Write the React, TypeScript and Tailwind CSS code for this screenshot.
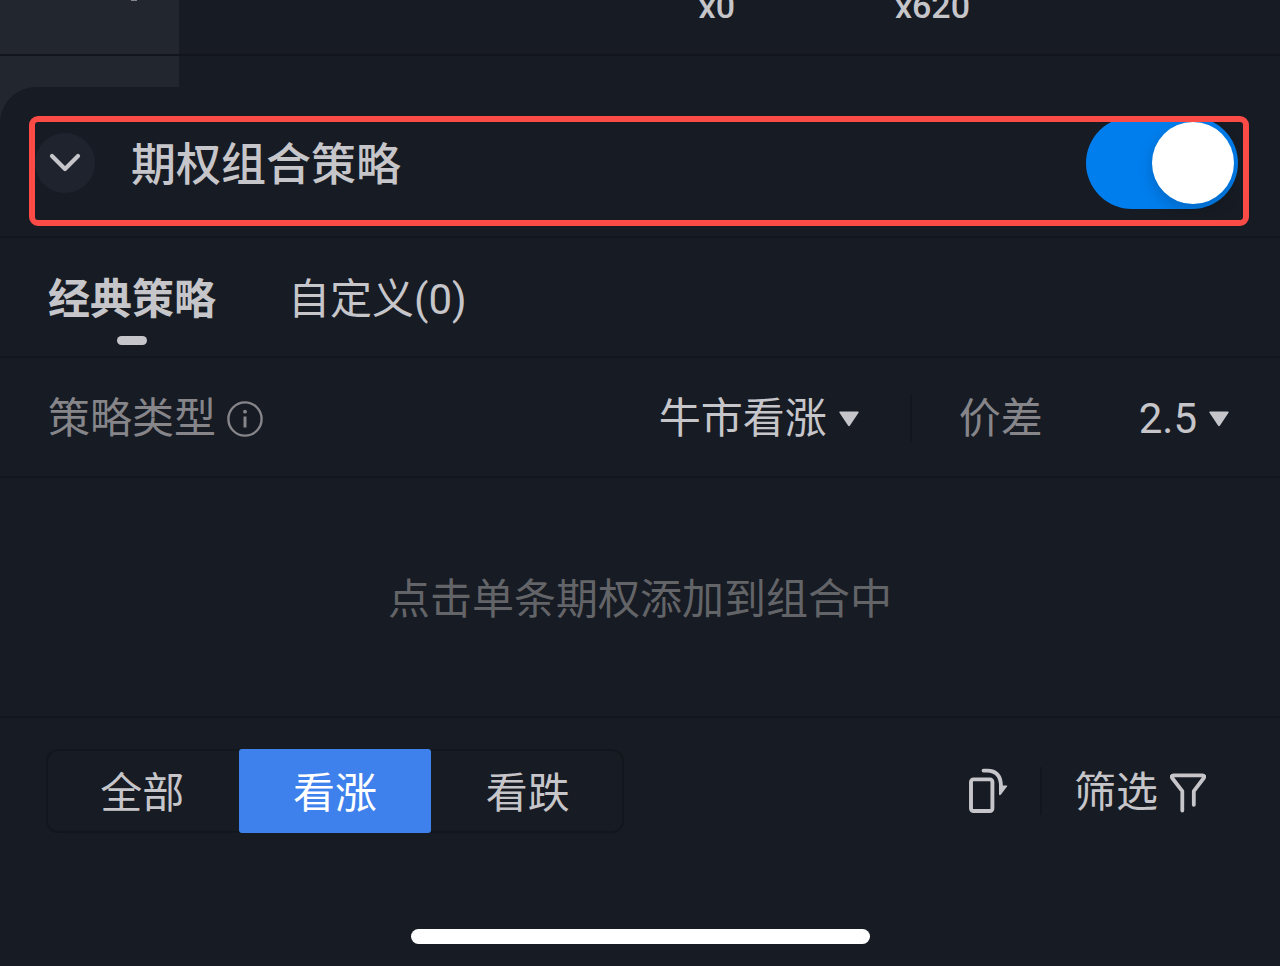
import { useState } from "react";

function Caret() {
  return (
    <svg aria-hidden="true" viewBox="0 0 20 16" className="pointer-events-none h-4 w-5 shrink-0 fill-[#c6c6ca]">
      <path d="M1.3 0.5h17.4q1.6 0 0.8 1.3L11 14.6q-1 1.3-2 0L0.5 1.8Q-0.3 0.5 1.3 0.5Z" />
    </svg>
  );
}

function InfoIcon() {
  return (
    <svg aria-hidden="true" viewBox="0 0 36 36" fill="none" className="size-9 stroke-[#85858a]">
      <circle cx="18" cy="18" r="16.6" strokeWidth="2.4" />
      <path d="M18 15.5v11" strokeWidth="3" />
      <circle cx="18" cy="10.7" r="1.9" stroke="none" fill="#85858a" />
    </svg>
  );
}

function RotateIcon() {
  return (
    <svg aria-hidden="true" viewBox="0 0 40 46" fill="none" className="h-[46px] w-10">
      <rect x="3" y="11.4" width="21.4" height="31.6" rx="2.5" stroke="#c6c6ca" strokeWidth="3.9" />
      <path d="M15.5 2.6H19C28.500 2.600 33 8.500 33 18.500" stroke="#c6c6ca" strokeWidth="3.8" strokeLinecap="round" />
      <path d="M31 17.500H38.500q1.300 0 .5 1.100L33 26.600q-1.800 1.500-2-.6Z" fill="#c6c6ca" />
    </svg>
  );
}

function FilterIcon() {
  return (
    <svg aria-hidden="true" viewBox="0 0 36 40" fill="none" className="h-10 w-9">
      <path
        d="M12.3 37.5V18.2L2.2 5Q.8 2.4 3.6 2.4H32.4Q35.2 2.4 33.8 5L23.8 18.2V31.8"
        stroke="#c6c6ca"
        strokeWidth="3.8"
        strokeLinecap="round"
        strokeLinejoin="round"
      />
    </svg>
  );
}

const sides = ["全部", "看涨", "看跌"];
const tabs = ["经典策略", "自定义(0)"];

export default function App() {
  const [side, setSide] = useState("看涨");
  const [tab, setTab] = useState(0);

  return (
    <div className="min-h-screen overflow-hidden bg-[#171b23] font-['Roboto','Noto_Sans_CJK_SC',sans-serif] text-[42px] leading-[60px] text-[#c6c6ca]">
      <div className="flex flex-col">
        <div className="flex h-14 items-end overflow-hidden border-b-2 border-[#12151c] text-[34px] leading-10 font-medium">
          <div className="flex h-full w-[179px] shrink-0 items-start bg-[#22262e] pl-[131px]">
            <span className="h-px w-1.5 bg-[#85858a]" />
          </div>
          <div className="w-[556px] pb-7 text-right">x0</div>
          <div className="w-[235px] pb-7 text-right">x620</div>
        </div>
        <div className="h-[67px] w-[179px] bg-[linear-gradient(#22262e_31px,transparent_31px)]">
          <div className="h-full w-12 bg-[#22262e]" />
        </div>
      </div>

      <section className="relative -mt-9 rounded-t-[36px] bg-[#171b23]">
        <header className="relative flex h-[151px] items-center border-b-2 border-[#12161d] pt-0.5 pr-[42px] pl-[35px]">
          <button aria-label="收起" className="flex size-[60px] items-center justify-center rounded-full bg-[#1e232e]">
            <svg aria-hidden="true" viewBox="0 0 32 20" fill="none" className="h-5 w-8">
              <path d="M3 3l13 13L29 3" stroke="#c6c6ca" strokeWidth="4.2" strokeLinecap="round" strokeLinejoin="round" />
            </svg>
          </button>
          <label htmlFor="combo" className="ml-9 pt-1.5 text-[45px] font-medium">
            期权组合策略
          </label>
          <input
            id="combo"
            type="checkbox"
            role="switch"
            defaultChecked
            className="ml-auto flex h-[92px] w-[152px] appearance-none items-center rounded-full bg-[#3a3f4a] px-1 before:size-[82px] before:rounded-full before:bg-white before:shadow-[0_6px_16px_rgba(0,0,0,0.18)] checked:justify-end checked:bg-[#007eee]"
          />
          <div className="pointer-events-none absolute top-[29px] right-[31px] bottom-[10px] left-[29px] rounded-[9px] border-6 border-[#fa4b47]" />
        </header>

        <nav className="flex h-[120px] items-start gap-[72px] border-b-2 border-[#12161d] px-12 pt-8">
          {tabs.map((name, i) => (
            <button
              key={name}
              onClick={() => setTab(i)}
              className={tab === i ? "flex flex-col items-center gap-[6px] font-bold" : "flex flex-col items-center gap-[6px]"}
            >
              {name}
              {tab === i && <span className="h-[9px] w-[30px] rounded-full bg-[#c6c6ca]" />}
            </button>
          ))}
        </nav>

        <div className="flex h-[120px] items-center border-b-2 border-[#12161d] pt-1 pr-[51px] pl-12">
          <label htmlFor="kind" className="text-[#85858a]">
            策略类型
          </label>
          <button aria-label="策略类型说明" className="ml-[11px]">
            <InfoIcon />
          </button>
          <div className="ml-auto flex items-center gap-3">
            <select id="kind" className="h-[60px] appearance-none [field-sizing:content]">
              <option>牛市看涨</option>
            </select>
            <Caret />
          </div>
          <div className="ml-[51px] h-12 w-0.5 bg-[#12161d]" />
          <label htmlFor="spread" className="ml-[47px] text-[#85858a]">
            价差
          </label>
          <div className="ml-24 flex items-center gap-3">
            <select id="spread" className="h-[60px] appearance-none [field-sizing:content]">
              <option>2.5</option>
            </select>
            <Caret />
          </div>
        </div>

        <p className="flex h-[240px] items-center justify-center border-b-2 border-[#12161d] pt-1.5 text-[#636468]">
          点击单条期权添加到组合中
        </p>

        <div className="flex items-center pt-[31px] pr-[74px] pl-[46px]">
          <div className="flex h-[84px] w-[578px] rounded-xl ring-2 ring-[#12161d] ring-inset">
            {sides.map((name) => (
              <button
                key={name}
                aria-pressed={side === name}
                onClick={() => setSide(name)}
                className={side === name ? "flex-1 rounded-[3px] bg-[#3e81ec] pt-1.5 text-white" : "flex-1 pt-1.5"}
              >
                {name}
              </button>
            ))}
          </div>
          <button aria-label="切换方向" className="ml-auto">
            <RotateIcon />
          </button>
          <div className="ml-8 h-12 w-0.5 bg-[#12161d]" />
          <button className="ml-8 flex items-center gap-3 pt-1">
            <span>筛选</span>
            <FilterIcon />
          </button>
        </div>

        <div className="mx-auto mt-24 h-[15px] w-[459px] rounded-full bg-white" />
      </section>
    </div>
  );
}
